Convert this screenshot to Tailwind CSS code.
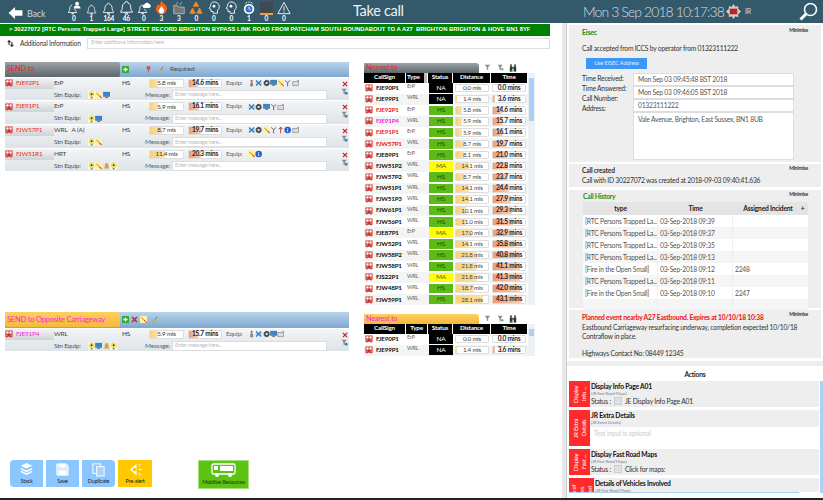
<!DOCTYPE html>
<html lang="en">
<head>
<meta charset="UTF-8">
<title>Take call</title>
<script src="https://cdn.jsdelivr.net/npm/@tailwindcss/browser@4"></script>
</head>
<body class="w-[823px] h-[500px] overflow-hidden bg-white text-[#333] font-['Lato',sans-serif] text-[6.500px] tracking-[-0.2px] leading-none whitespace-nowrap">

<!-- icon set -->
<svg class="hidden">
  <symbol id="bell" viewBox="0 0 16 16"><path d="M8 1.500a1.300 1.300 0 0 1 1.300 1.400C11.600 3.600 12.500 5.500 12.500 8c0 2 .6 3 1.800 4.200v.8H1.700v-.8C2.900 11 3.500 10 3.500 8c0-2.500.9-4.400 3.200-5.100A1.300 1.300 0 0 1 8 1.500zM6.500 14h3a1.500 1.500 0 0 1-3 0z" fill="none" stroke="#fff" stroke-width="1"/></symbol>
  <symbol id="bellp" viewBox="0 0 16 16"><path d="M6 4.500c-2 .6-2.800 2-2.800 4.500 0 1.500-.5 2.500-1.700 3.500v.7h9.500v-.7C9.800 11.500 9 10.500 9 9" fill="none" stroke="#fff"/><path d="M5 14h3a1.500 1.500 0 0 1-3 0z" fill="#fff"/><circle cx="11.500" cy="3" r="2.200" fill="#fff"/><path d="M7.500 8.500c0-2.500 1.500-3.500 4-3.500s4 1 4 3.500z" fill="#fff"/></symbol>
  <symbol id="bellc" viewBox="0 0 16 16"><path d="M6 4.500c-2 .6-2.800 2-2.800 4.500 0 1.500-.5 2.500-1.700 3.500v.7h9.500v-.7C9.800 11.500 9 10.500 9 9" fill="none" stroke="#fff"/><path d="M5 14h3a1.500 1.500 0 0 1-3 0z" fill="#fff"/><path d="M8 8a2 2 0 0 1 .5-4A3 3 0 0 1 14 3.500 2.300 2.300 0 0 1 14 8z" fill="#fff"/></symbol>
  <symbol id="flame" viewBox="0 0 16 16"><path d="M8 .5c1 3 4 3.500 5.500 6.500 1.500 4-1.500 8.500-5.500 8.500S1 11.500 2.500 7.500C3 6 4 5.500 4.500 4c.6 1 1 1.500 1.500 2C6.500 4 7 2.500 8 .5z" fill="#f0641e"/><path d="M8 6c.5 2 3 3 2.800 5.500C10.600 13.500 9.500 14.500 8 14.500s-2.800-1-2.900-3C5 9.500 7.500 8.500 8 6z" fill="#fff"/></symbol>
  <symbol id="folder" viewBox="0 0 16 16"><path d="M2 5h4l1.500 2H14v7.500H2z" fill="#777" stroke="#ccc" stroke-width=".8"/><path d="M5 4c0-2 2-1.500 2-3M9 5c0-2 2-2 2-4" fill="none" stroke="#999" stroke-width="1.200"/></symbol>
  <symbol id="tri3" viewBox="0 0 16 16"><path d="M8 1l3 5H5zM4 8l3 6H1zM12 8l3 6H9z" fill="#f28a21" stroke="#f28a21"/></symbol>
  <symbol id="head" viewBox="0 0 16 16"><path d="M8 1c3.500 0 6 2.500 6 5.500 0 2-1 3-2 4v3.500H7v-2H4.500V9.500L2.500 8.500 4 6C4 3 5.500 1 8 1z" fill="none" stroke="#fff"/><circle cx="8" cy="6" r="1.600" fill="#fff"/></symbol>
  <symbol id="clock" viewBox="0 0 16 16"><circle cx="8" cy="9" r="6" fill="#fff"/><circle cx="8" cy="9" r="4" fill="#2f78c4"/><path d="M8 6.500V9l2 1" stroke="#fff" fill="none"/><path d="M4 3l2-2M12 3l-2-2M8 2V.5" stroke="#fff"/></symbol>
  <symbol id="warn" viewBox="0 0 16 16"><path d="M8 1.500L15 14.500H1z" fill="none" stroke="#fff" stroke-width="1"/><path d="M8 6v5M8 12v1.200" stroke="#fff"/></symbol>
  <symbol id="bus" viewBox="0.5 1 9 9"><path d="M1 1.500h8v7H8v1H6.700v-1H3.300v1H2v-1H1z" fill="#c9302c"/><rect x="2" y="2.500" width="2.500" height="2.500" fill="#fff"/><rect x="5.500" y="2.500" width="2.500" height="2.500" fill="#fff"/><rect x="2" y="6.200" width="1.200" height="1" fill="#fff"/><rect x="6.800" y="6.200" width="1.200" height="1" fill="#fff"/></symbol>
  <symbol id="bulb" viewBox="0 0 10 10"><rect width="10" height="10" fill="#fdfbd0"/><circle cx="5" cy="4" r="3.500" fill="#f4e56a" stroke="#c8b840" stroke-width=".5"/><circle cx="5" cy="4" r="1.300" fill="#333"/><rect x="3.800" y="7.800" width="2.400" height="2" fill="#777"/></symbol>
  <symbol id="wand" viewBox="0 0 10 10"><rect width="10" height="10" fill="#fdf3a8"/><path d="M2 2l7 7" stroke="#e0a030" stroke-width="1.500"/><path d="M6 6l3.500 3.500" stroke="#d0312d" stroke-width="1.200"/></symbol>
  <symbol id="monitor" viewBox="0 0 10 10"><rect x=".5" y="1" width="9" height="6" fill="#3b86c8" stroke="#2a5f8e" stroke-width=".5"/><rect x="3" y="7" width="4" height="2" fill="#777"/></symbol>
  <symbol id="cross" viewBox="0 0 10 10"><path d="M1.500 1.500l7 7M8.500 1.500l-7 7" stroke="#2f78c4" stroke-width="1.800"/><path d="M1 5h1.500M7.500 5H9" stroke="#2f78c4"/></symbol>
  <symbol id="gear" viewBox="0 0 10 10"><circle cx="5" cy="5" r="3.600" fill="#555" stroke="#333" stroke-dasharray="1 .8" stroke-width="1.400"/><circle cx="5" cy="5" r="1.500" fill="#eee"/></symbol>
  <symbol id="fork" viewBox="0 0 10 10"><path d="M1.500 1.500L5 4.500l3.500-3M5 4.500V9.500" stroke="#555" stroke-width="1.200" fill="none"/></symbol>
  <symbol id="box" viewBox="0 0 10 10"><path d="M1 3h6.500V1.500L9 1v7.500H1z" fill="#ddd" stroke="#666" stroke-width=".7"/></symbol>
  <symbol id="tower" viewBox="0 0 10 10"><circle cx="5" cy="2" r="1.500" fill="#c9504a"/><path d="M3.500 4h3l.8 5.500H2.700z" fill="#888"/></symbol>
  <symbol id="info" viewBox="0 0 10 10"><circle cx="5" cy="5" r="4.500" fill="#2a5fc4"/><path d="M5 2.300v1M5 4.300v3.300" stroke="#fff" stroke-width="1.200"/></symbol>
  <symbol id="arrow" viewBox="0 0 10 10"><path d="M5 9.500V1.500M2.500 4L5 1l2.500 3" stroke="#a02020" stroke-width="1.100" fill="none"/></symbol>
  <symbol id="amber" viewBox="0 0 10 10"><path d="M5 1c2 0 2.500 2 2.500 4S9 8 9 8.500H1C1 8 2.500 7 2.500 5S3 1 5 1z" fill="#d8a03c"/></symbol>
  <symbol id="x" viewBox="0 0 10 10"><path d="M1.500 1.500l7 7M8.500 1.500l-7 7" stroke="#c8201c" stroke-width="2"/></symbol>
  <symbol id="funnel" viewBox="0 0 10 10"><path d="M1 1h7L5.500 4.500V9L3.500 8V4.500z" fill="#888"/><circle cx="7.500" cy="7.500" r="2" fill="#3b86c8"/></symbol>
  <symbol id="funnelg" viewBox="0 0 10 10"><path d="M1 1h7L5.500 4.500V9L3.500 8V4.500z" fill="#8a8a8a"/><path d="M7.500 5.500v4M5.500 7.500h4" stroke="#3aa53a" stroke-width="1.200"/></symbol>
  <symbol id="funnely" viewBox="0 0 10 10"><path d="M1 1h8L6 4.500V9L4 8V4.500z" fill="#8a8a8a"/><path d="M6 1h3L7 3.500z" fill="#e7c64a"/></symbol>
  <symbol id="binoc" viewBox="0 0 10 10"><rect x="1" y="3" width="3.200" height="6.500" fill="#2a3a2a"/><rect x="5.800" y="3" width="3.200" height="6.500" fill="#2a3a2a"/><rect x="4" y="4" width="2" height="2" fill="#2a3a2a"/><rect x="1.500" y=".5" width="2" height="2.500" fill="#2a3a2a"/><rect x="6.500" y=".5" width="2" height="2.500" fill="#2a3a2a"/><rect x="1" y="8" width="3.200" height="1.500" fill="#3aa53a"/></symbol>
  <symbol id="plus" viewBox="0 0 10 10"><rect width="10" height="10" rx="1.500" fill="#35a535"/><path d="M5 2v6M2 5h6" stroke="#fff" stroke-width="1.800"/></symbol>
  <symbol id="pin" viewBox="0 0 10 10"><path d="M2.500 1h5v4l-1.500 1-.7 4h-.6L4 6 2.500 5z" fill="#d0504a"/></symbol>
  <symbol id="brush" viewBox="0 0 10 10"><path d="M9 1L5 5.500" stroke="#8a6a1a" stroke-width="1.200"/><path d="M5.500 4.500L7 6C6 8 4 9 1 9c1.500-1 2-3 4.500-4.500z" fill="#e2aa1c"/></symbol>
</svg>

<!-- top bar -->
<header class="flex items-center h-[23px] bg-[#34596b] text-white">
  <div class="flex items-center w-[65px] pl-[8px] pt-[3px] gap-[4px]">
    <svg class="w-[15px] h-[12px]" viewBox="0 0 15 13"><path d="M7 0v3.500h8v6H7V13L0 6.500z" fill="#fff"/></svg>
    <span class="text-[9px] text-[#c9d5db]">Back</span>
  </div>
  <div id="alerts" class="flex w-[228px]"></div>
  <div class="ml-[60px] w-[230px] text-[14.500px] tracking-[-0.3px] text-[#eef3f5]">Take call</div>
  <div class="w-[143px] text-[14px] tracking-[-0.9px] font-light text-[#d3dde2]">Mon 3 Sep 2018 10:17:38</div>
  <svg class="w-[15px] h-[15px]" viewBox="0 0 16 16"><path d="M8 0l2 3 3-1 0 3 3 3-3 3 0 3-3-1-2 3-2-3-3 1 0-3-3-3 3-3 0-3 3 1z" fill="#d9c8c8"/><rect x="4" y="5" width="8" height="6" fill="#b4262a"/></svg>
  <span class="ml-[4px] w-[54px] text-[7px] text-[#d5dfe4]">IR</span>
  <svg class="w-[19px] h-[19px]" viewBox="0 0 19 19"><circle cx="11.500" cy="7.500" r="6" fill="none" stroke="#fff" stroke-width="1.600"/><path d="M7 12L1.500 17.500" stroke="#fff" stroke-width="3"/></svg>
</header>

<div class="flex h-[475px]">
  <!-- left side -->
  <main class="w-[562px] shrink-0">
    <div class="mt-px w-[550px] h-[11.500px] bg-[#008000] pl-[9px] flex items-center font-['Liberation_Sans',sans-serif] font-bold text-[5.900px] tracking-normal text-white whitespace-pre overflow-hidden">&gt; 30227072 [RTC Persons Trapped Large] STREET RECORD BRIGHTON BYPASS LINK ROAD FROM PATCHAM SOUTH ROUNDABOUT TO A A27  BRIGHTON BRIGHTON &amp; HOVE BN1 8YF</div>
    <div class="flex items-center h-[13px] mt-px w-[550px]">
      <svg class="ml-[7px] w-[7px] h-[7px]" viewBox="0 0 10 10"><path d="M3 1v6M1 3l2-2 2 2M7 9V3M5 7l2 2 2-2" stroke="#222" stroke-width="1.500" fill="none"/></svg>
      <span class="ml-[6px] w-[67px] text-[6.600px]">Additional Information</span>
      <div class="flex-1 h-[11px] bg-white border border-[#ddd] pl-[3px] flex items-center text-[5.500px] text-[#bbb]">Enter additional information here</div>
    </div>

    <div class="flex mt-[12px]">
      <!-- send column -->
      <div class="ml-[5px] w-[344px]">
        <section class="h-[250px]">
          <div class="flex items-center h-[15px] bg-gradient-to-b from-[#b9d3ec] to-[#7ea8cf]">
            <div class="w-[115px] h-[15px] rounded-r-[2px] bg-gradient-to-b from-[#9aa3a7] to-[#5f686c] pl-[2px] flex items-center text-[#ee2222] text-[7.500px]">SEND to</div>
            <svg class="ml-[2px] w-[7px] h-[7px]"><use href="#plus"/></svg>
            <svg class="ml-[16px] w-[7px] h-[8px]"><use href="#pin"/></svg>
            <svg class="ml-[5px] w-[7px] h-[7px]"><use href="#brush"/></svg>
            <span class="ml-[6px] text-[#44505a]">Required:</span>
          </div>
          <div id="sendRows"></div>
        </section>
        <section>
          <div class="flex items-center h-[16px] bg-gradient-to-b from-[#b9d3ec] to-[#7ea8cf]">
            <div class="w-[115px] h-[15px] rounded-[2px] bg-gradient-to-b from-[#fcd15f] to-[#f6b73c] pl-[2px] flex items-center text-[#ff22dd] text-[7.500px]">SEND to Opposite Carriageway</div>
            <svg class="ml-[2px] w-[7px] h-[7px]"><use href="#plus"/></svg>
            <svg class="ml-[2px] w-[7px] h-[7px]"><use href="#x"/></svg>
            <svg class="ml-[2px] w-[7px] h-[7px]"><use href="#wand"/></svg>
            <svg class="ml-[4px] w-[7px] h-[7px]"><use href="#brush"/></svg>
          </div>
          <div id="oppRows" class="mt-px"></div>
        </section>
        <div class="flex mt-[109px] ml-[5px] text-[5.500px]">
          <div class="w-[33px] h-[27px] rounded-l-[4px] bg-[#8cc6ff] flex flex-col items-center pt-[2px] text-[#222]">
            <svg class="w-[15px] h-[15px]" viewBox="0 0 16 16"><path d="M8 1l6 3-6 3-6-3z" fill="#fff"/><path d="M2 7l6 3 6-3M2 10l6 3 6-3" fill="none" stroke="#fff" stroke-width="1.600"/></svg><span class="mt-[2px]">Stack</span>
          </div>
          <div class="ml-[3px] w-[33px] h-[27px] bg-[#8cc6ff] flex flex-col items-center pt-[2px] text-[#222]">
            <svg class="w-[15px] h-[15px]" viewBox="0 0 16 16"><path d="M2 2h10l2 2v10H2z" fill="#d9ecff" stroke="#fff"/><rect x="5" y="2" width="6" height="4" fill="#fff"/><rect x="4" y="9" width="8" height="5" fill="#fff"/></svg><span class="mt-[2px]">Save</span>
          </div>
          <div class="ml-[3px] w-[33px] h-[27px] rounded-r-[4px] bg-[#8cc6ff] flex flex-col items-center pt-[2px] text-[#222]">
            <svg class="w-[15px] h-[15px]" viewBox="0 0 16 16"><rect x="2" y="2" width="8" height="10" fill="none" stroke="#fff"/><rect x="6" y="5" width="8" height="10" fill="#a8d4ff" stroke="#fff"/></svg><span class="mt-[2px]">Duplicate</span>
          </div>
          <div class="ml-[3px] w-[34px] h-[27px] bg-[#ffc800] flex flex-col items-center pt-[2px] text-[#222]">
            <svg class="w-[15px] h-[15px]" viewBox="0 0 16 16"><path d="M2 8l7-6v12z" fill="#fff"/><circle cx="7" cy="8" r="2" fill="#ffc800"/><path d="M11 4l3-2M11.500 8H15M11 12l3 2" stroke="#fff"/></svg><span class="mt-[2px]">Pre-alert</span>
          </div>
          <div class="ml-[46px] w-[51px] h-[29px] bg-[#5cc313] border border-[#a6e07a] flex flex-col items-center pt-[2px] text-[#1d3a05]">
            <svg class="w-[25px] h-[15px]" viewBox="0 0 25 15"><rect x="1" y="1" width="23" height="10" rx="1.500" fill="none" stroke="#fff" stroke-width="1.300"/><rect x="3" y="3" width="4" height="4" fill="#fff"/><rect x="9" y="3" width="13" height="5" fill="#fff"/><circle cx="6" cy="12" r="2" fill="#fff"/><circle cx="19" cy="12" r="2" fill="#fff"/></svg><span class="mt-[2px]">Mobilise Resources</span>
          </div>
        </div>
      </div>

      <!-- nearest column -->
      <div class="ml-[15px] w-[171px] pt-px">
        <section class="h-[251px]">
          <div class="flex items-center h-[10px]">
            <div class="w-[115px] h-[10px] rounded-tr-[3px] bg-gradient-to-b from-[#9aa3a7] to-[#5f686c] pl-[2px] flex items-center text-[#ee2222] text-[7.200px]">Nearest to</div>
            <svg class="ml-[5px] w-[7px] h-[7px]"><use href="#funnely"/></svg>
            <svg class="ml-[6px] w-[7px] h-[7px]"><use href="#funnelg"/></svg>
            <svg class="ml-[5px] w-[8px] h-[8px]"><use href="#binoc"/></svg>
          </div>
          <div class="flex">
            <div class="w-[164px]">
              <div class="flex h-[10px] gap-px text-white font-bold text-[6.300px] text-center">
                <div class="w-[41px] bg-black flex items-center justify-center">CallSign</div>
                <div class="w-[21px] bg-black flex items-center justify-between pl-[1px]">Type<span class="w-[3px] h-full bg-[#bbb]"></span></div>
                <div class="w-[24px] bg-black flex items-center justify-center">Status</div>
                <div class="w-[37px] bg-black flex items-center justify-center">Distance</div>
                <div class="w-[36px] bg-black flex items-center justify-center">Time</div>
              </div>
              <div id="nearRows"></div>
            </div>
            <div class="w-[7px] h-[232px] bg-[#eef1f3] pt-[5px] pl-px"><div class="w-[5px] h-[43px] bg-[#a9d0f5]"></div></div>
          </div>
        </section>
        <section>
          <div class="flex items-center h-[10px]">
            <div class="w-[115px] h-[10px] rounded-tr-[3px] bg-gradient-to-b from-[#fcd15f] to-[#f6b73c] pl-[2px] flex items-center text-[#ff22dd] text-[7.200px]">Nearest to</div>
            <svg class="ml-[5px] w-[7px] h-[7px]"><use href="#funnely"/></svg>
            <svg class="ml-[6px] w-[7px] h-[7px]"><use href="#funnelg"/></svg>
            <svg class="ml-[5px] w-[8px] h-[8px]"><use href="#binoc"/></svg>
          </div>
          <div class="flex">
            <div class="w-[164px]">
              <div class="flex h-[10px] gap-px text-white font-bold text-[6.300px] text-center">
                <div class="w-[41px] bg-black flex items-center justify-center">CallSign</div>
                <div class="w-[21px] bg-black flex items-center justify-center">Type</div>
                <div class="w-[24px] bg-black flex items-center justify-center">Status</div>
                <div class="w-[37px] bg-black flex items-center justify-center">Distance</div>
                <div class="w-[36px] bg-black flex items-center justify-center">Time</div>
              </div>
              <div id="nearRows2"></div>
            </div>
            <div class="w-[7px] h-[32px] bg-[#eef1f3] pt-[5px] pl-px"><div class="w-[5px] h-[7px] bg-[#a9d0f5]"></div></div>
          </div>
        </section>
      </div>
    </div>
  </main>

  <!-- right side -->
  <aside class="flex-1 flex h-[475px] text-[6.700px] text-[#333]">
    <div class="w-[5px] bg-[#e8e8e8] border-r border-[#ccc]"></div>
    <div class="flex-1 pl-[2px] pr-[2px] pt-[2px]">
      <section class="h-[137px] bg-[#eee] pl-[13px] pr-[5px] relative">
        <span class="absolute right-[13px] top-[3px] text-[5px] font-bold">Minimise</span>
        <div class="pt-[4px] font-bold text-[#1a8a1a] text-[7px]">Eisec</div>
        <div class="mt-[9px]">Call accepted from ICCS by operator from 01323111222</div>
        <div class="mt-[6px] ml-[4px] w-[61px] h-[11px] bg-[#3d97f9] text-[#d8ebff] text-[5.800px] flex items-center justify-center">Use EISEC Address</div>
        <div class="flex mt-[4px]">
          <div class="w-[51px] flex flex-col gap-[3.500px] pt-[2px]">
            <span>Time Received:</span><span>Time Answered:</span><span>Call Number:</span><span>Address:</span>
          </div>
          <div class="w-[161px] flex flex-col text-[#555]">
            <div class="h-[13px] bg-white border border-[#ddd] pl-[4px] flex items-center">Mon Sep 03 09:45:48 BST 2018</div>
            <div class="h-[13px] bg-white border border-[#ddd] pl-[4px] flex items-center">Mon Sep 03 09:46:05 BST 2018</div>
            <div class="h-[13px] bg-white border border-[#ddd] pl-[4px] flex items-center">01323111222</div>
            <div class="h-[48px] bg-white border border-[#ddd] pl-[4px] pt-[3px]">Vale Avenue, Brighton, East Sussex, BN1 8UB</div>
          </div>
        </div>
      </section>
      <section class="mt-[2px] h-[23px] bg-[#eee] pl-[13px] relative">
        <span class="absolute right-[13px] top-[2px] text-[5px] font-bold">Minimise</span>
        <div class="pt-[3px] font-bold">Call created</div>
        <div class="mt-[3px]">Call with ID 30227072 was created at 2018-09-03 09:40:41.636</div>
      </section>
      <section class="mt-[3px] h-[118px] bg-[#eee] pl-[14px] relative">
        <span class="absolute right-[13px] top-[2px] text-[5px] font-bold">Minimise</span>
        <div class="pt-[3px] h-[12px] font-bold text-[#1a8a1a]">Call History</div>
        <div class="w-[225px]">
          <div class="flex h-[13px] bg-[#e4e4e4] font-bold text-[#222] items-center text-center">
            <div class="w-[75px]">type</div><div class="w-[75px]">Time</div><div class="w-[64px] pl-[6px]">Assigned Incident</div><div class="w-[11px]">+</div>
          </div>
          <div id="history"></div>
        </div>
      </section>
      <section class="mt-[2px] h-[48px] bg-[#eee] pl-[13px] relative leading-[9px]">
        <span class="absolute right-[13px] top-[2px] text-[5px] font-bold leading-none">Minimise</span>
        <div class="pt-[3px] font-bold text-[#ee1111]">Planned event nearby A27 Eastbound. Expires at 10/10/18 10:38</div>
        <div class="mt-[1px]">Eastbound Carriageway resurfacing underway, completion expected 10/10/18</div>
        <div>Contraflow in place.</div>
        <div class="mt-[8px]">Highways Contact No: 08449 12345</div>
      </section>
      <div class="mt-[3px] -mx-[2px] h-[5px] bg-[#eee]"></div>
      <div class="h-[15px] flex items-center justify-center font-bold text-[#222] pt-[1px]">Actions</div>
      <section class="flex gap-[1px] mr-[-2px] h-[112px] overflow-hidden">
        <div class="flex-1 flex flex-col gap-[3px]">
          <div class="flex h-[26px] bg-[#eee] shrink-0">
            <div class="w-[21px] bg-[#ff2a2a] text-white text-[5.800px] flex items-center justify-center [writing-mode:vertical-rl] rotate-180 text-center leading-[8px]">Display<br>Info ...</div>
            <div class="pl-px">
              <div class="pt-[2px] font-bold text-[#111]">Display Info Page A01</div>
              <div class="mt-[2px] text-[4.500px] text-[#888]">(JR Fast Road Maps)</div>
              <div class="mt-px flex items-center gap-[3px]">Status :<span class="w-[8px] h-[8px] bg-[#e0e0e0] border border-[#ccc]"></span>JE Display Info Page A01</div>
            </div>
          </div>
          <div class="flex h-[36px] shrink-0">
            <div class="w-[21px] bg-[#ff2a2a] text-white text-[5.800px] flex items-center justify-center [writing-mode:vertical-rl] rotate-180 text-center leading-[8px]">JR Extra<br>Details</div>
            <div class="flex-1">
              <div class="h-[17px] bg-[#eee] pl-px">
                <div class="pt-[2px] font-bold text-[#111]">JR Extra Details</div>
                <div class="mt-[2px] text-[4.500px] text-[#888]">(JR Extra Details)</div>
              </div>
              <div class="h-[19px] bg-white pl-[4px] pt-[3px] text-[#ccc]">Text input is optional</div>
            </div>
          </div>
          <div class="flex h-[26px] bg-[#eee] shrink-0">
            <div class="w-[21px] bg-[#ff2a2a] text-white text-[5.800px] flex items-center justify-center [writing-mode:vertical-rl] rotate-180 text-center leading-[8px]">Display<br>Fast ...</div>
            <div class="pl-px">
              <div class="pt-[2px] font-bold text-[#111]">Display Fast Road Maps</div>
              <div class="mt-[2px] text-[4.500px] text-[#888]">(JR Fast Road Maps)</div>
              <div class="mt-px flex items-center gap-[3px]">Status :<span class="w-[8px] h-[8px] bg-[#e0e0e0] border border-[#ccc]"></span>Click for maps:</div>
            </div>
          </div>
          <div class="flex h-[14px] bg-[#eee] overflow-hidden shrink-0">
            <div class="w-[25px] h-[36px] shrink-0 bg-[#ff2a2a] text-white text-[5.800px] flex items-center justify-center [writing-mode:vertical-rl] rotate-180 text-center leading-[8px]">Details of<br>Vehicles<br>Involved</div>
            <div class="pl-px">
              <div class="pt-[2px] font-bold text-[#111]">Details of Vehicles Involved</div>
              <div class="mt-[2px] text-[4.500px] text-[#888]">(JR Fast Road Maps)</div>
            </div>
          </div>
          <div class="w-[230px] h-[5px] bg-[#a9d0f5] shrink-0 -mt-[3px]"></div>
        </div>
        <div class="w-[3px] bg-[#a9d0f5]"></div>
      </section>
    </div>
  </aside>
</div>
<div class="h-[2px] bg-[#222]"></div>

<script>
  // [icon, count, size class]
  const alerts = [["bellp",0,"w-[14px] h-[14px]"],["bell",1,"w-[11px] h-[11px]"],["bell",164,"w-[13px] h-[13px]"],["bell",46,"w-[15px] h-[15px]"],["bellc",0,"w-[14px] h-[14px]"],["flame",3,"w-[15px] h-[15px]"],["folder",3,"w-[14px] h-[14px]"],["tri3",0,"w-[14px] h-[14px]"],["head",0,"w-[14px] h-[14px]"],["head",0,"w-[14px] h-[14px]"],["clock",1,"w-[14px] h-[14px]"],["",0,""],["warn",0,"w-[14px] h-[14px]"]];
  document.getElementById("alerts").innerHTML = alerts.map(([icon, n, size]) => `
    <div class="w-[17.500px] flex flex-col items-center">
      <div class="h-[15px] flex items-end">${icon ? `<svg class="${size}"><use href="#${icon}"/></svg>` : `<div class="w-[13px] h-[13px] bg-[#3e4a50] border-b-2 border-[#e8a04a]"></div>`}</div>
      <span class="mt-px text-[6.500px] font-bold">${n}</span>
    </div>`).join("");

  const icons = list => list.map(i => `<svg class="w-[7.300px] h-[8px]"><use href="#${i}"/></svg>`).join("");

  function sendRow(r) {
    return `
    <div class="flex h-[22.700px] mt-px bg-gradient-to-b from-[#f3f5f7] to-[#dde3e7]">
      <div class="w-[49px] h-[11px] flex items-center bg-gradient-to-b from-[#f4f4f4] to-[#cfd3d6]">
        <svg class="w-[8px] h-[8px]"><use href="#bus"/></svg>
        <span class="ml-[3px] text-[6.500px] ${r.color}">${r.call}</span>
      </div>
      <div class="flex-1">
        <div class="flex items-center h-[11px]">
          <span class="w-[68px] text-[#444] whitespace-pre">${r.type}</span>
          <span class="w-[27px]">HS</span>
          <div class="relative w-[35px] h-[9px] bg-white border border-[#ddd] rounded-[1px] flex items-center justify-center text-[6.300px]">
            <div class="absolute left-0 top-0 h-full bg-gradient-to-r from-[#f8d27a] to-[#fbe3a8]" style="width:${r.dist * 1.35}px"></div><span class="relative">${r.dist.toFixed(1)} mls</span>
          </div>
          <div class="relative ml-[4px] w-[34px] h-[9px] bg-white border border-[#ddd] rounded-[1px] flex items-center justify-center font-bold text-[#222]">
            <div class="absolute left-0 top-0 h-full bg-gradient-to-r from-[#f59a6c] to-[#fad0b8]" style="width:${r.time * 0.6}px"></div><span class="relative">${r.time.toFixed(1)} mins</span>
          </div>
          <span class="ml-[4px] w-[22px] text-[#666]">Equip:</span>
          <div class="flex">${icons(r.equip)}</div>
        </div>
        <div class="flex items-center h-[11px] mt-px">
          <span class="w-[34px] text-[#555]">Stn Equip:</span>
          <div class="flex w-[57px]">${icons(r.stn)}</div>
          <span class="w-[27px] text-[#666]">Message:</span>
          <div class="w-[155px] h-[10px] bg-white border border-[#ddd] pl-[2px] flex items-center text-[5.500px] text-[#bbb]">Enter message here...</div>
        </div>
      </div>
      <div class="w-[7px] mr-px flex flex-col items-center gap-[1px] pt-[3px]">
        <svg class="w-[6px] h-[6px]"><use href="#x"/></svg>
        <svg class="w-[7px] h-[7px]"><use href="#funnel"/></svg>
      </div>
    </div>`;
  }

  const red = "text-[#ee2b2b]";
  document.getElementById("sendRows").innerHTML = [
    {call:"FJE92P1", color:red, type:"ErP", dist:5.8, time:14.6, equip:["tower","cross","gear","monitor","wand","fork","box"], stn:["bulb","wand","monitor"]},
    {call:"FJE91P1", color:red, type:"ErP", dist:5.9, time:16.1, equip:["cross","gear","monitor","fork","box"], stn:["bulb","monitor"]},
    {call:"FJW57P1", color:red, type:"WRL   A (A)", dist:8.7, time:19.7, equip:["cross","gear","wand","fork","arrow","info","box"], stn:["bulb","wand"]},
    {call:"FJW51R1", color:red, type:"HRT", dist:11.4, time:20.3, equip:["wand","info"], stn:["bulb","wand","amber","bulb"]}
  ].map(sendRow).join("");
  document.getElementById("oppRows").innerHTML = sendRow({call:"FJE91P4", color:"text-[#f02bd8]", type:"WRL", dist:5.9, time:15.7, equip:["tower","cross","gear","monitor","box"], stn:["bulb","monitor","amber","bulb"]});

  const statusClass = {
    NA: "bg-black text-white",
    HS: "bg-[#5dbb17] text-[#1d4a05]",
    MA: "bg-[#ffff00] text-[#555]"
  };
  const near = [
    ["FJE90P1","ErP","NA",0.0,0.0,"text-[#111]"],["FJE99P1","WRL","NA",1.4,3.6,"text-[#111]"],
    ["FJE92P1","ErP","HS",5.8,14.6,"text-[#e81c1c]"],["FJE91P4","WRL","HS",5.9,15.7,"text-[#f01ee0]"],
    ["FJE91P1","ErP","HS",5.9,16.1,"text-[#e81c1c]"],["FJW57P1","WRL","HS",8.7,19.7,"text-[#e81c1c]"],
    ["FJE89P1","ErP","HS",8.1,21.0,"text-[#111]"],["FJW51P2","WRL","MA",14.1,22.8,"text-[#111]"],
    ["FJW57P2","WRL","HS",8.7,23.7,"text-[#111]"],["FJW51P1","WRL","HS",14.1,24.4,"text-[#111]"],
    ["FJW51P3","WRL","HS",14.1,27.9,"text-[#111]"],["FJW61P1","WRL","HS",10.1,29.3,"text-[#111]"],
    ["FJW56P1","WRL","HS",11.0,31.5,"text-[#111]"],["FJE87P1","ErP","MA",17.0,32.9,"text-[#111]"],
    ["FJW52P1","WRL","HS",14.1,35.8,"text-[#111]"],["FJW58P2","WRL","HS",21.8,40.8,"text-[#111]"],
    ["FJW58P1","WRL","HS",21.8,41.1,"text-[#111]"],["FJS22P1","WRL","MA",21.8,41.3,"text-[#111]"],
    ["FJW48P1","WRL","HS",18.7,42.0,"text-[#111]"],["FJW59P1","WRL","HS",28.1,43.1,"text-[#111]"]
  ];
  const nearRow = ([call, type, status, dist, time, color], i) => `
    <div class="flex items-center h-[11.150px] ${i % 2 ? "bg-[#f3f5f5]" : "bg-white"}">
      <svg class="ml-px w-[8px] h-[8px] shrink-0"><use href="#bus"/></svg>
      <span class="ml-[3px] w-[31px] font-bold text-[6.300px] ${color}">${call}</span>
      <span class="w-[22px] text-[5.500px] text-[#666] -mt-[2px]">${type}</span>
      <div class="w-[24px] h-[9.500px] flex items-center justify-center ${statusClass[status]}">${status}</div>
      <div class="relative ml-[2px] w-[34px] h-[8.500px] bg-white border border-[#ddd] rounded-[1px] flex items-center justify-center text-[6.200px] text-[#444]">
        <div class="absolute left-0 top-0 h-full bg-gradient-to-r from-[#f8d27a] to-[#fbe3a8]" style="width:${dist * 0.95}px"></div><span class="relative">${dist.toFixed(1)} mls</span>
      </div>
      <div class="relative ml-[3px] w-[34px] h-[8.500px] bg-white border border-[#ddd] rounded-[1px] flex items-center justify-center font-bold text-[#222]">
        <div class="absolute left-0 top-0 h-full bg-gradient-to-r from-[#f59a6c] to-[#fad0b8]" style="width:${time * 0.65}px"></div><span class="relative">${time.toFixed(1)} mins</span>
      </div>
    </div>`;
  document.getElementById("nearRows").innerHTML = near.map(nearRow).join("");
  document.getElementById("nearRows2").innerHTML = near.slice(0, 2).map(nearRow).join("");

  const rtc = "[RTC Persons Trapped La...";
  const fire = "[Fire in the Open Small]";
  const history = [[rtc,"09:39",""],[rtc,"09:37",""],[rtc,"09:35",""],[rtc,"09:13",""],[fire,"09:12","2248"],[rtc,"09:11",""],[fire,"09:10","2247"],["","",""]];
  document.getElementById("history").innerHTML = history.map(([type, t, inc], i) => `
    <div class="flex h-[12px] items-center text-[#555] ${i % 2 ? "bg-[#f5f5f5]" : "bg-white"}">
      <div class="w-[75px] pl-[2px] overflow-hidden border-r border-[#eee] h-full flex items-center">${type}</div>
      <div class="w-[75px] pl-[2px] border-r border-[#eee] h-full flex items-center">${t ? "03-Sep-2018 " + t : ""}</div>
      <div class="pl-[2px]">${inc}</div>
    </div>`).join("");
</script>
</body>
</html>
